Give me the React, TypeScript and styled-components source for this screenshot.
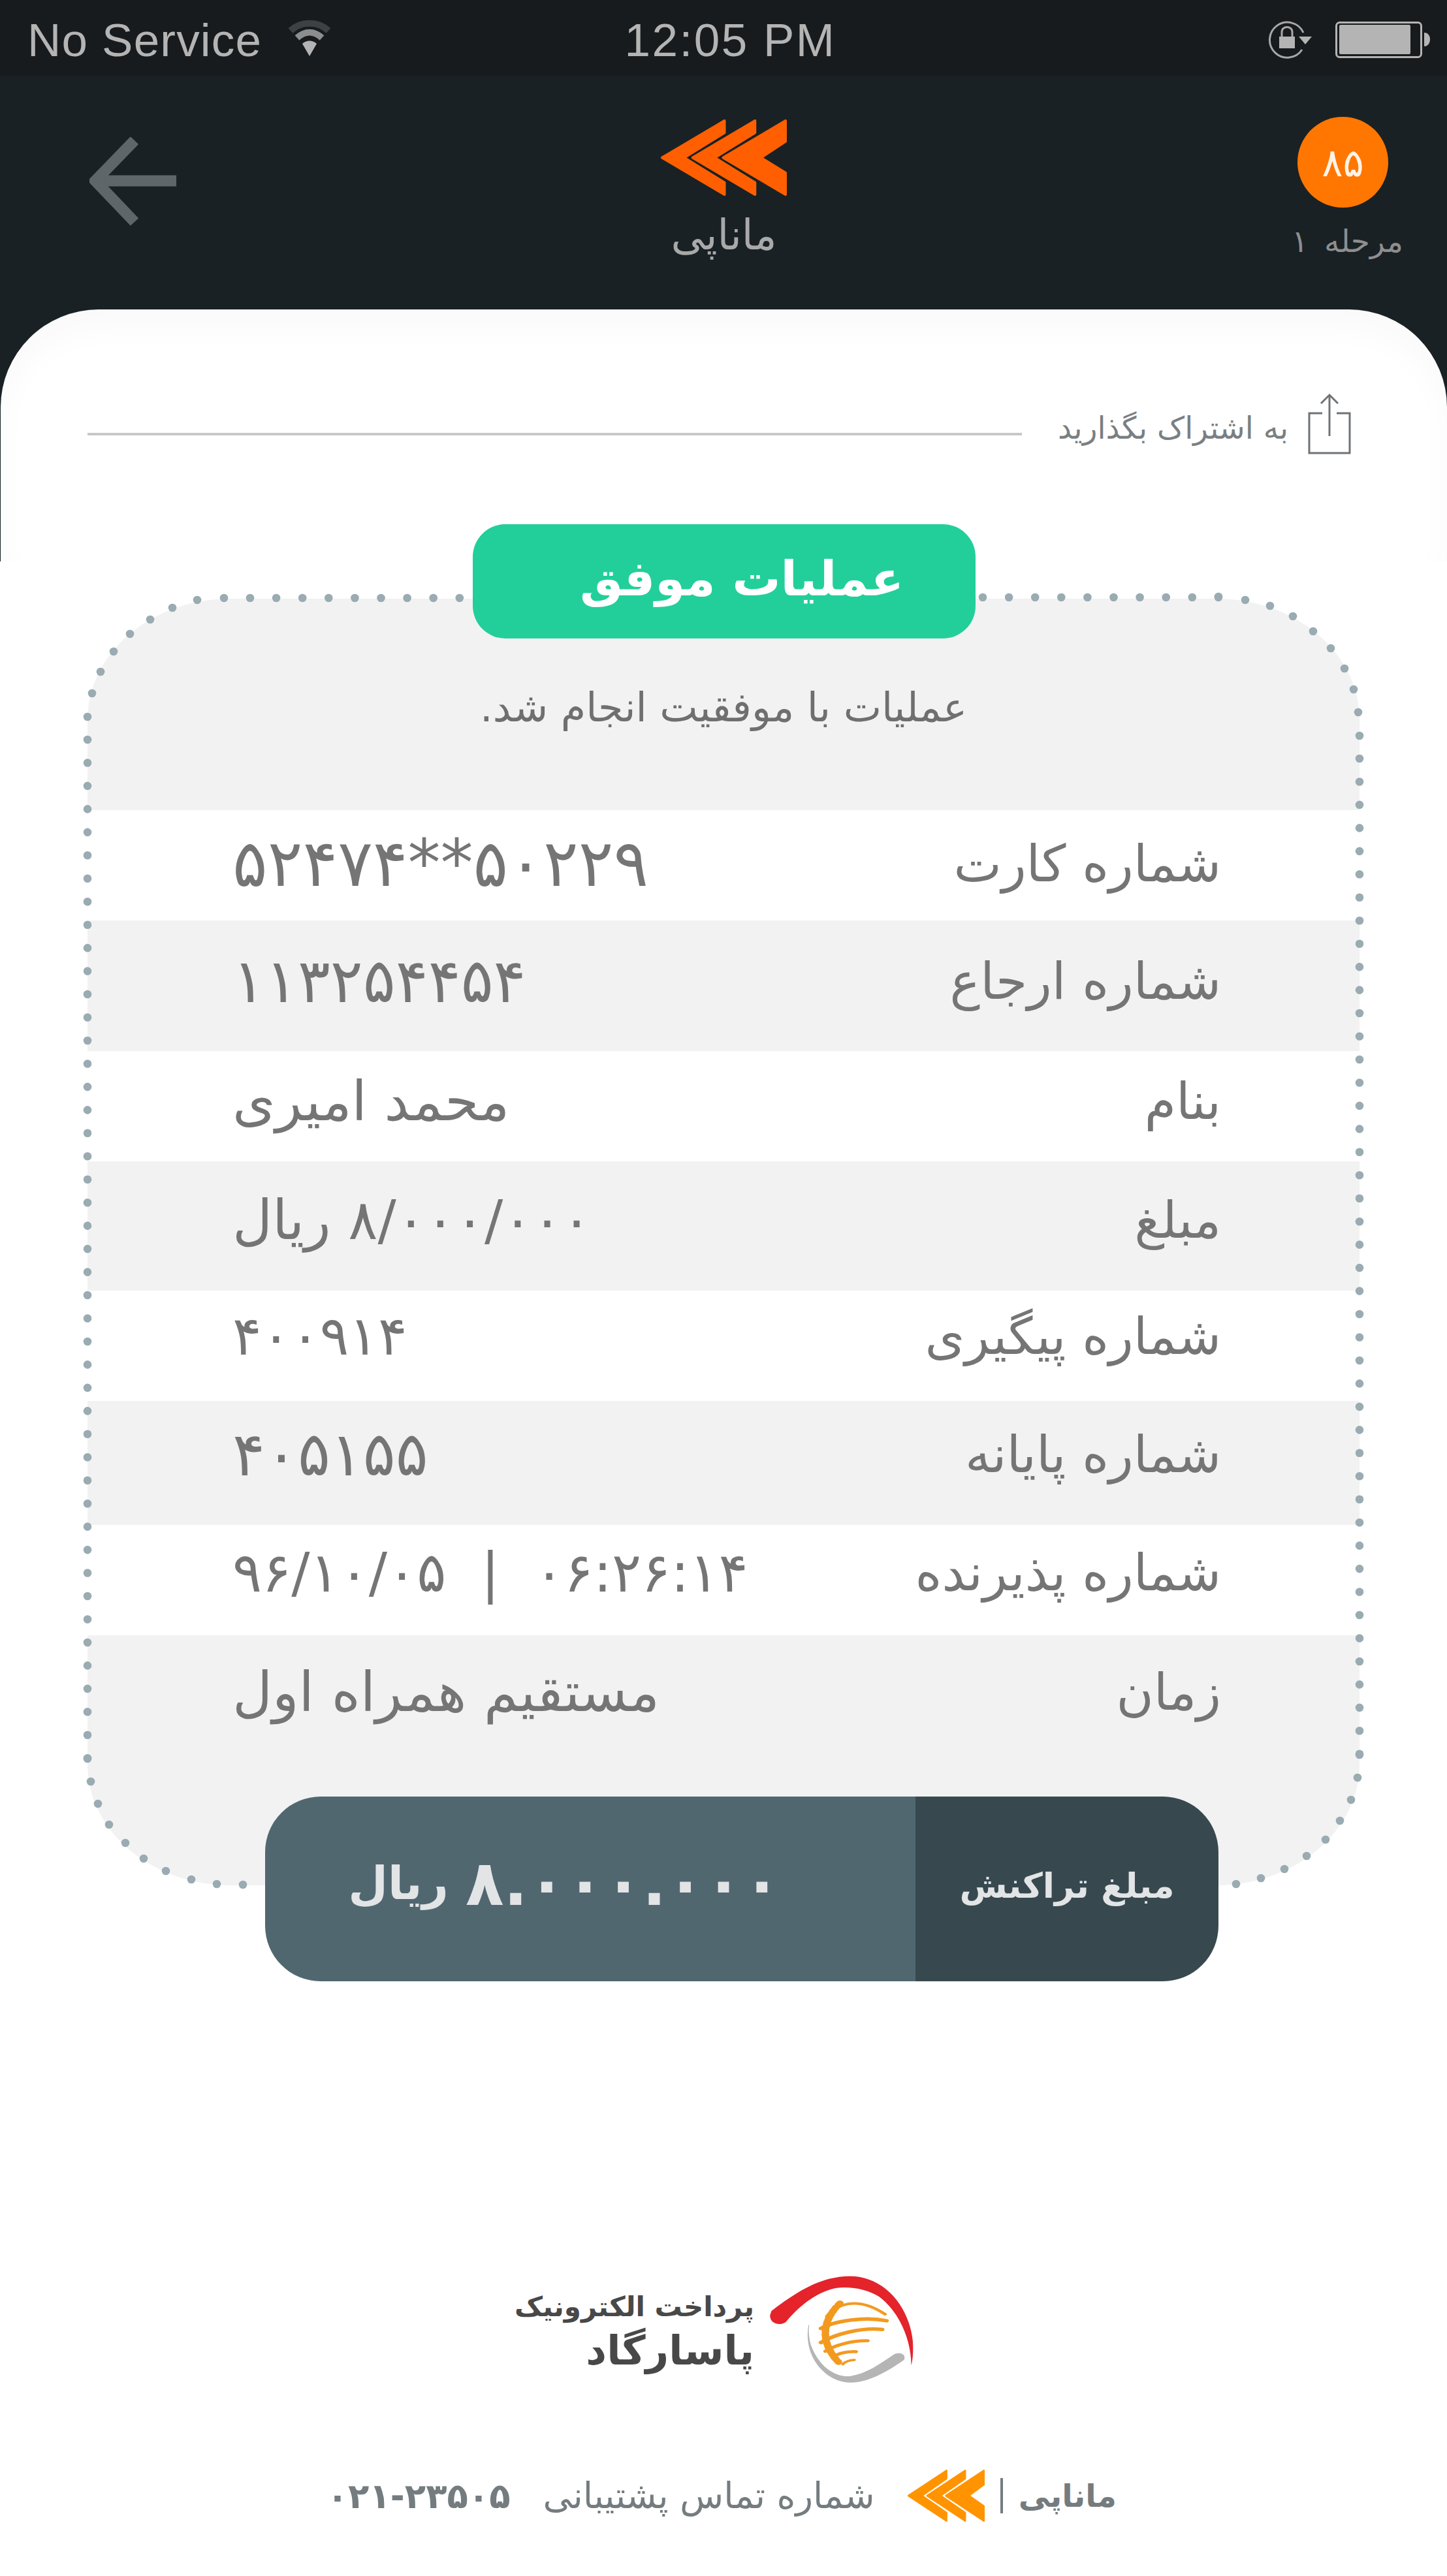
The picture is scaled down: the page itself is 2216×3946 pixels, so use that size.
import React from "react";
import styled, { createGlobalStyle } from "styled-components";

const Global = createGlobalStyle`
  html, body { margin: 0; padding: 0; background: #fff; }
  * { box-sizing: border-box; }
`;

const fa = `"DejaVu Sans", "Noto Sans", sans-serif`;
const latin = `"Liberation Sans", Arial, sans-serif`;

const Page = styled.div`
  width: 2216px;
  height: 3946px;
  overflow: hidden;
  background: #fff;
  font-family: ${fa};
  display: flex;
  flex-direction: column;
`;

const StatusBar = styled.div`
  height: 117px;
  background: #181b1d;
  color: #b4b4b4;
  font-family: ${latin};
  position: relative;
  display: grid;
  grid-template-columns: 1fr auto 1fr;
  align-items: start;
  padding: 0 26px 0 42px;
`;

const StatusLeft = styled.div`
  display: flex;
  align-items: flex-start;
  gap: 38px;
`;

const StatusText = styled.span<{ $track: number; $shift?: number }>`
  display: block;
  height: 117px;
  line-height: 124px;
  font-size: 71px;
  letter-spacing: ${(p) => p.$track}px;
  margin-left: ${(p) => p.$shift ?? 0}px;
`;

const StatusRight = styled.div`
  display: flex;
  justify-content: flex-end;
  align-items: flex-start;
`;

const Top = styled.div`
  height: 743px;
  background: #192125;
  padding-left: 1px;
  display: flex;
  flex-direction: column;
`;

const Header = styled.div`
  height: 357px;
  display: grid;
  grid-template-columns: 1fr auto 1fr;
  padding: 0 67px;
`;

const BackIcon = styled.svg`
  margin: 93px 0 0 69px;
  display: block;
`;

const Brand = styled.div`
  display: flex;
  flex-direction: column;
  align-items: center;
  padding-top: 66px;
`;

const BrandName = styled.div`
  color: #a9a9a9;
  font-size: 64px;
  line-height: 80px;
  margin-top: 20px;
  direction: rtl;
`;

const Step = styled.div`
  justify-self: end;
  display: flex;
  flex-direction: column;
  align-items: center;
  padding-top: 62px;
`;

const StepCircle = styled.div`
  width: 139px;
  height: 139px;
  border-radius: 50%;
  background: #ff7700;
  color: #fff3e8;
  display: flex;
  align-items: center;
  justify-content: center;
  font-size: 60px;
  direction: rtl;
  margin-right: 14px;
`;

const StepLabel = styled.div`
  color: #8e8e8e;
  font-size: 47px;
  line-height: 60px;
  margin-top: 22px;
  direction: rtl;
  word-spacing: 10px;
`;

const ShareCard = styled.div`
  flex: 1;
  background: #fff;
  border-radius: 150px 150px 0 0;
  box-shadow: inset 0 30px 50px rgba(0, 0, 0, 0.025);
  padding: 128px 147px 0 133px;
`;

const ShareRow = styled.div`
  display: flex;
  direction: rtl;
  align-items: flex-start;
`;

const ShareLabel = styled.div`
  color: #7a7f82;
  font-size: 47px;
  line-height: 60px;
  margin: 24px 30px 0 55px;
  white-space: nowrap;
`;

const ShareLine = styled.div`
  flex: 1;
  height: 4px;
  margin-top: 61px;
  background: #c8c8c8;
`;

const Main = styled.div`
  flex: 1;
  display: flex;
  flex-direction: column;
  background: #fff;
  padding-top: 57px;
`;

const Panel = styled.div`
  position: relative;
  margin-left: 134px;
  width: 1948px;
  height: 1971px;
  background: #f2f2f2;
  border-radius: 220px / 185px;
  direction: rtl;
  flex: none;
`;

const Dots = styled.svg`
  position: absolute;
  left: 0;
  top: 0;
  overflow: visible;
  pointer-events: none;
`;

const Badge = styled.div`
  position: absolute;
  top: -114px;
  left: 590px;
  width: 770px;
  height: 175px;
  border-radius: 50px;
  background: #22cf9a;
  color: #fff;
  font-weight: 700;
  font-size: 74px;
  display: flex;
  align-items: center;
  justify-content: center;
  padding: 0 0 10px 54px;
`;

const Intro = styled.div`
  height: 324px;
  padding-top: 127px;
  text-align: center;
  color: #6f6f6f;
  font-size: 62px;
  line-height: 80px;
`;

const Row = styled.div<{ $h: number; $pad: number; $white: boolean }>`
  height: ${(p) => p.$h}px;
  background: ${(p) => (p.$white ? "#fff" : "#f2f2f2")};
  display: flex;
  justify-content: space-between;
  padding: ${(p) => p.$pad}px 212px 0 222px;
  color: #757575;
  font-size: 78px;
  line-height: 90px;
`;

const Label = styled.div`
  white-space: nowrap;
`;

const TextValue = styled.div`
  white-space: nowrap;
  font-size: 84px;
`;

const DigitValue = styled.div<{ $size: number }>`
  white-space: pre;
  direction: ltr;
  font-size: ${(p) => p.$size}px;
`;

const AmountBar = styled.div`
  position: absolute;
  left: 272px;
  top: 1835px;
  width: 1460px;
  height: 283px;
  border-radius: 85px;
  overflow: hidden;
  display: flex;
  color: #e2e4e6;
  font-weight: 700;
`;

const AmountLabel = styled.div`
  width: 464px;
  background: #37494f;
  font-size: 53px;
  display: flex;
  align-items: center;
  justify-content: center;
  padding-bottom: 10px;
`;

const AmountValue = styled.div`
  flex: 1;
  background: #516770;
  font-size: 96px;
  display: flex;
  align-items: center;
  justify-content: flex-start;
  padding: 0 206px 18px 0;
  white-space: pre;
  gap: 26px;
`;

const AmountUnit = styled.span`
  font-size: 70px;
`;

const LogoRow = styled.div`
  display: flex;
  align-items: flex-start;
  margin: 597px 0 0 788px;
  width: 612px;
  direction: rtl;
  flex: none;
`;

const LogoText = styled.div`
  flex: 1;
  color: #484848;
  font-weight: 700;
  margin: 0 22px 0 27px;
  padding-top: 19px;
`;

const LogoLine = styled.div`
  font-size: 42px;
  line-height: 60px;
  white-space: nowrap;
`;

const LogoLineBig = styled.div`
  font-size: 62px;
  line-height: 74px;
  white-space: nowrap;
`;

const Footer = styled.div`
  display: flex;
  direction: rtl;
  align-items: center;
  height: 90px;
  margin: 123px 506px 0 0;
  color: #747c7f;
  font-size: 48px;
  font-weight: 700;
  white-space: nowrap;
`;

const FooterPipe = styled.div`
  width: 4px;
  height: 54px;
  background: #747c7f;
  margin: 0 24px;
`;

const FooterContact = styled.div`
  margin: 0 50px 0 50px;
  font-size: 55px;
  font-weight: 400;
`;

const FooterPhone = styled.div`
  font-size: 53px;
  font-weight: 700;
`;

const chevrons = (
  <>
    <polygon points="192,270 478,100 478,155 293,270 478,385 478,440" />
    <polygon points="332,270 618,100 618,155 433,270 618,385 618,440" />
    <polygon points="472,270 758,100 758,195 645,270 758,340 758,440" />
  </>
);

const Chevrons: React.FC<{ color: string; w: number; h: number }> = ({ color, w, h }) => (
  <svg
    width={w}
    height={h}
    viewBox="186 94 578 352"
    preserveAspectRatio="none"
    fill={color}
    stroke={color}
    strokeWidth="12"
    strokeLinejoin="round"
    style={{ display: "block", flex: "none" }}
  >
    {chevrons}
  </svg>
);

type RowData = { label: string; value: string; h: number; pad: number; size?: number };

const rows: RowData[] = [
  { label: "شماره کارت", value: "۵۲۴۷۴**۵۰۲۲۹", h: 169, pad: 37, size: 100 },
  { label: "شماره ارجاع", value: "۱۱۳۲۵۴۴۵۴", h: 200, pad: 48, size: 93 },
  { label: "بنام", value: "محمد امیری", h: 169, pad: 32 },
  { label: "مبلغ", value: "۸/۰۰۰/۰۰۰ ریال", h: 198, pad: 45 },
  { label: "شماره پیگیری", value: "۴۰۰۹۱۴", h: 169, pad: 25, size: 83 },
  { label: "شماره پایانه", value: "۴۰۵۱۵۵", h: 190, pad: 37, size: 93 },
  { label: "شماره پذیرنده", value: "۹۶/۱۰/۰۵  |  ۰۶:۲۶:۱۴", h: 169, pad: 28, size: 84 },
  { label: "زمان", value: "مستقیم همراه اول", h: 200, pad: 42 },
];

const corners: [number, number][] = [
  [134, 1098], [141, 1062], [154, 1029], [174, 998], [199, 971], [230, 949], [264, 931], [302, 919], [343, 916],
  [1866, 914], [1907, 919], [1945, 928], [1980, 944], [2011, 967], [2038, 993], [2059, 1024], [2073, 1056], [2080, 1091], [2082, 1127],
  [134, 2694], [139, 2729], [150, 2763], [167, 2795], [192, 2823], [220, 2847], [254, 2866], [293, 2879], [332, 2886], [372, 2887],
  [2082, 2688], [2079, 2723], [2069, 2757], [2052, 2789], [2030, 2818], [2001, 2843], [1967, 2863], [1931, 2877], [1893, 2886],
];

const dotList: [number, number][] = [...corners];
for (let x = 383; x <= 704; x += 40.1) dotList.push([x, 916]);
for (let x = 1505; x < 1866; x += 40.1) dotList.push([x, 915]);
for (let y = 1133; y < 2694; y += 35.46) dotList.push([134, y]);
for (let y = 1162; y < 2688; y += 35.46) dotList.push([2082, y]);

export default function App() {
  return (
    <Page>
      <Global />
      <StatusBar>
        <StatusLeft>
          <StatusText $track={1.2}>No Service</StatusText>
          <svg width="70" height="60" viewBox="0 0 70 60" fill="none" style={{ marginTop: 30, display: "block" }}>
            <path d="M6 17 C22 2 48 2 64 17" stroke="#3d4143" strokeWidth="10" />
            <path d="M16 28 C28 17 42 17 54 28" stroke="#8b8d8e" strokeWidth="10" />
            <path d="M24 37 C30 31 40 31 46 37 L35 56 Z" fill="#b4b4b4" />
          </svg>
        </StatusLeft>
        <StatusText $track={2.5} $shift={5}>12:05 PM</StatusText>
        <StatusRight>
          <svg width="248" height="117" viewBox="1942 0 248 117" fill="none" style={{ display: "block" }}>
            <path d="M1996 50 A27 27 0 1 0 1994 76" stroke="#a8a8a8" strokeWidth="3" />
            <rect x="1959" y="56" width="24" height="18" fill="#b4b4b4" />
            <path d="M1963 56 V49 C1963 39 1979 39 1979 49 V56" stroke="#a8a8a8" strokeWidth="3" />
            <polygon points="1989,56 2009,56 1999,68" fill="#b4b4b4" />
            <rect x="2046.5" y="34.5" width="130" height="53" rx="5" stroke="#b4b4b4" strokeWidth="3" />
            <rect x="2051" y="38" width="109" height="45" rx="2" fill="#b4b4b4" />
            <path d="M2181 50 C2187 50 2190 55 2190 60 C2190 66 2187 71 2181 71 Z" fill="#b4b4b4" />
          </svg>
        </StatusRight>
      </StatusBar>
      <Top>
        <Header>
          <div>
            <BackIcon width="134" height="136" viewBox="136 211 134 136" fill="none" stroke="#5e666a" strokeWidth="17">
              <path d="M269 278 H150" />
              <path d="M205 216 L145 278 L205 341" />
            </BackIcon>
          </div>
          <Brand>
            <Chevrons color="#ff5f00" w={193} h={117} />
            <BrandName>ماناپی</BrandName>
          </Brand>
          <Step>
            <StepCircle>۸۵</StepCircle>
            <StepLabel>مرحله ۱</StepLabel>
          </Step>
        </Header>
        <ShareCard>
          <ShareRow>
            <svg width="66" height="94" viewBox="0 0 66 94" fill="none" stroke="#6e7376" strokeWidth="3" style={{ display: "block", flex: "none" }}>
              <path d="M22 31 H2 V92 H64 V31 H44" />
              <path d="M33 66 V3" />
              <path d="M20 16 L33 3 L46 16" />
            </svg>
            <ShareLabel>به اشتراک بگذارید</ShareLabel>
            <ShareLine />
          </ShareRow>
        </ShareCard>
      </Top>
      <Main>
        <Panel>
          <Intro>عملیات با موفقیت انجام شد.</Intro>
          {rows.map((r, i) => (
            <Row key={r.label} $h={r.h} $pad={r.pad} $white={i % 2 === 0}>
              <Label>{r.label}</Label>
              {r.size === undefined ? (
                <TextValue>{r.value}</TextValue>
              ) : (
                <DigitValue $size={r.size}>{r.value}</DigitValue>
              )}
            </Row>
          ))}
          <Dots width="1948" height="1971" viewBox="134 917 1948 1971">
            {dotList.map(([x, y], i) => (
              <circle key={i} cx={x} cy={y} r="6.3" fill="#9aabb2" />
            ))}
          </Dots>
          <Badge>عملیات موفق</Badge>
          <AmountBar>
            <AmountLabel>مبلغ تراکنش</AmountLabel>
            <AmountValue>
              <span>۸.۰۰۰.۰۰۰</span>
              <AmountUnit>ریال</AmountUnit>
            </AmountValue>
          </AmountBar>
        </Panel>
        <LogoRow>
          <svg width="223" height="170" viewBox="960 100 500 510" preserveAspectRatio="none" style={{ display: "block", flex: "none" }}>
            <path
              d="M970 265 C1040 195 1130 105 1240 105 C1350 105 1440 230 1455 400 C1458 450 1455 490 1450 515 C1450 400 1410 270 1340 200 C1300 165 1240 150 1190 160 C1120 180 1060 250 1020 315 C1000 335 965 325 965 285 Z"
              fill="#e4232b"
            />
            <path
              d="M1097 330 C1085 420 1110 530 1190 580 C1260 620 1340 570 1425 490 C1435 465 1410 450 1390 465 C1340 510 1300 550 1240 565 C1180 570 1130 510 1105 420 C1097 380 1097 350 1100 330 Z"
              fill="#b5b5b5"
            />
            <g fill="none" stroke="#f29a20" strokeLinecap="round">
              <path d="M1160 290 C1190 240 1260 190 1360 280" strokeWidth="12" />
              <path d="M1140 345 C1190 310 1290 290 1365 310" strokeWidth="16" />
              <path d="M1140 410 C1190 370 1280 340 1350 350" strokeWidth="16" />
              <path d="M1155 450 C1190 420 1250 400 1300 402" strokeWidth="14" />
              <path d="M1180 480 C1195 460 1230 450 1260 452" strokeWidth="14" />
              <path d="M1215 510 C1220 500 1240 490 1255 490" strokeWidth="10" />
              <path d="M1205 230 C1150 300 1130 400 1200 500" strokeWidth="26" strokeDasharray="10 9" />
            </g>
          </svg>
          <LogoText>
            <LogoLine>پرداخت الکترونیک</LogoLine>
            <LogoLineBig>پاسارگاد</LogoLineBig>
          </LogoText>
        </LogoRow>
        <Footer>
          <div>ماناپی</div>
          <FooterPipe />
          <Chevrons color="#ff9400" w={118} h={80} />
          <FooterContact>شماره تماس پشتیبانی</FooterContact>
          <FooterPhone>۰۲۱-۲۳۵۰۵</FooterPhone>
        </Footer>
      </Main>
    </Page>
  );
}
